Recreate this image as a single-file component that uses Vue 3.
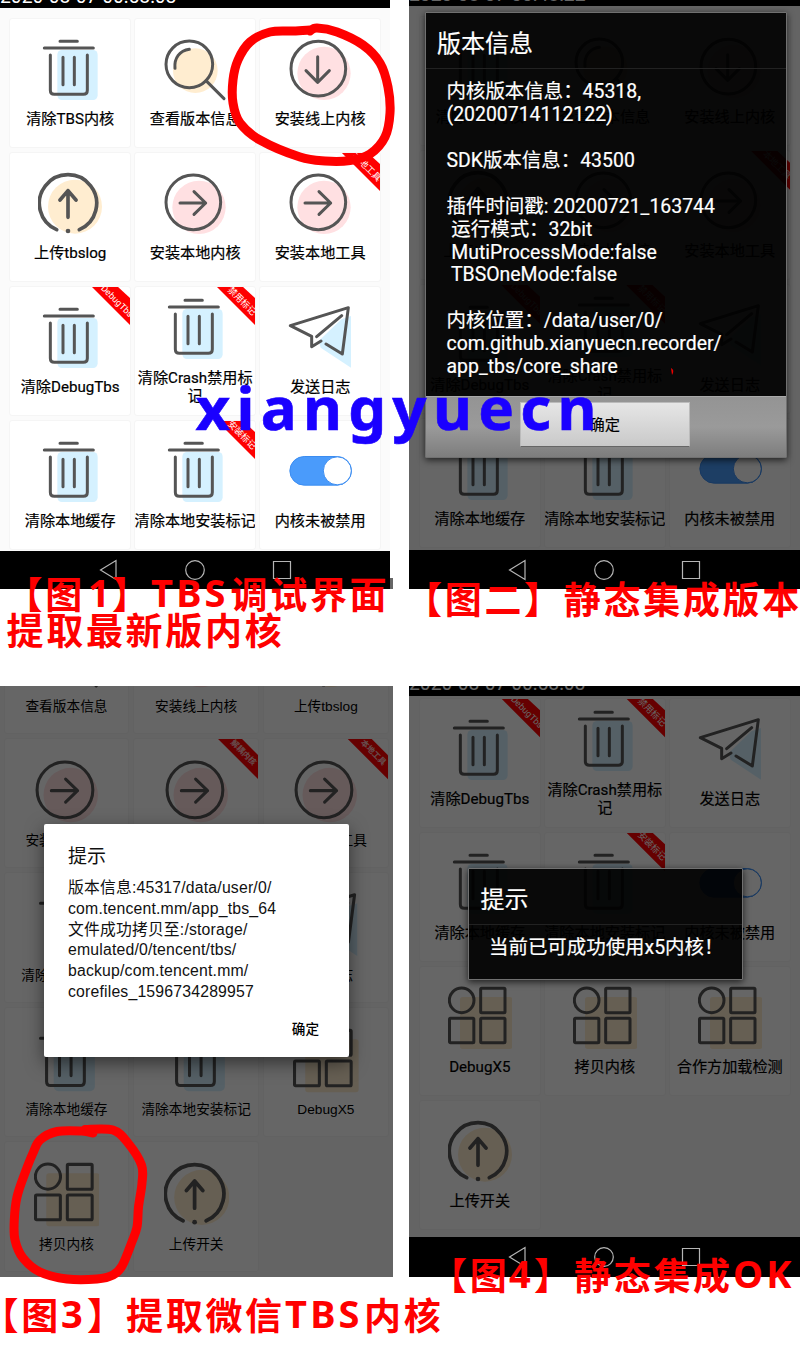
<script setup>
const card = (icon, label, ribbon) => ({ icon, label, ribbon })

const screens = [
  {
    id: 'p1', time: '2020-08-07 00:58:03', nav: true,
    cards: [
      card('trash', '清除TBS内核'), card('search', '查看版本信息'), card('down', '安装线上内核'),
      card('up', '上传tbslog'), card('right', '安装本地内核'), card('right', '安装本地工具', '本地工具'),
      card('trash', '清除DebugTbs', 'DebugTbs'), card('trash', '清除Crash禁用标记', '禁用标记'), card('plane', '发送日志'),
      card('trash', '清除本地缓存'), card('trash', '清除本地安装标记', '安装标记'), card('toggle', '内核未被禁用'),
    ],
  },
  {
    id: 'p2', time: '2020-08-07 00:48:22', nav: true, dim: true,
    cards: [
      card('trash', '清除TBS内核'), card('search', '查看版本信息'), card('down', '安装线上内核'),
      card('up', '上传tbslog'), card('right', '安装本地内核'), card('right', '安装本地工具', '本地工具'),
      card('trash', '清除DebugTbs', 'DebugTbs'), card('trash', '清除Crash禁用标记', '禁用标记'), card('plane', '发送日志'),
      card('trash', '清除本地缓存'), card('trash', '清除本地安装标记'), card('toggle', '内核未被禁用'),
    ],
  },
  {
    id: 'p3', dim: true,
    cards: [
      card('search', '查看版本信息'), card('down', '安装线上内核'), card('up', '上传tbslog'),
      card('right', '安装本地内核'), card('right', '安装解耦内核', '解耦内核'), card('right', '安装本地工具', '本地工具'),
      card('trash', '清除DebugTbs'), card('trash', '清除禁用标记'), card('plane', '发送日志'),
      card('trash', '清除本地缓存'), card('trash', '清除本地安装标记'), card('grid', 'DebugX5'),
      card('grid', '拷贝内核'), card('up', '上传开关'),
    ],
  },
  {
    id: 'p4', time: '2020-08-07 00:58:03', nav: true, dim: true,
    cards: [
      card('trash', '清除DebugTbs', 'DebugTbs'), card('trash', '清除Crash禁用标记', '禁用标记'), card('plane', '发送日志'),
      card('trash', '清除本地缓存'), card('trash', '清除本地安装标记', '安装标记'), card('toggle', '内核未被禁用'),
      card('grid', 'DebugX5'), card('grid', '拷贝内核'), card('grid', '合作方加载检测'),
      card('up', '上传开关'),
    ],
  },
]

const versionText = `内核版本信息：45318,
(20200714112122)

SDK版本信息：43500

插件时间戳: 20200721_163744
 运行模式：32bit
 MutiProcessMode:false
 TBSOneMode:false

内核位置：/data/user/0/
com.github.xianyuecn.recorder/
app_tbs/core_share`

const copyText = `版本信息:45317/data/user/0/
com.tencent.mm/app_tbs_64
文件成功拷贝至:/storage/
emulated/0/tencent/tbs/
backup/com.tencent.mm/
corefiles_1596734289957`

// Smooth freehand stroke through a list of points (Catmull-Rom to Bezier).
function stroke(p) {
  let d = `M${p[0]}`
  for (let i = 0; i < p.length - 1; i++) {
    const a = p[i - 1] || p[i], b = p[i], c = p[i + 1], e = p[i + 2] || c
    d += `C${b[0] + (c[0] - a[0]) / 6} ${b[1] + (c[1] - a[1]) / 6} ${c[0] - (e[0] - b[0]) / 6} ${c[1] - (e[1] - b[1]) / 6} ${c[0]} ${c[1]}`
  }
  return d
}
const ringTop = stroke([[310, 31], [317, 28], [337, 32], [363, 45], [380, 63], [388, 87], [390, 113], [385, 137], [370, 154], [350, 160.5], [325, 161], [300, 157], [260, 140], [240, 123], [233, 103], [233, 80], [238, 60], [250, 42], [270, 32], [293, 31], [310, 30]])
const ringBottom = stroke([[85, 1129.5], [113, 1130], [128, 1143], [141.5, 1165], [142, 1183], [138.5, 1207], [137, 1227], [131.5, 1243], [122, 1266], [113, 1275], [97, 1279], [67, 1279], [40, 1272], [23, 1258], [15, 1240], [14.3, 1220], [17, 1197], [25, 1173], [33, 1153], [40, 1140], [57, 1131.5], [82, 1131], [93, 1133]])

// Each caption is a run of CJK or Latin glyphs: [x, y, text, latin flag]
const captions = [
  [5.5, 608.5, '【图'], [88, 606.7, '1', 'l'], [112, 608.5, '】'], [151, 606.7, 'TBS', 'l'], [230.5, 608.5, '调试界面'],
  [6.5, 644.5, '提取最新版内核'],
  [405, 613.5, '【图二】静态集成版本'],
  [-18.5, 1329.5, '【图'], [61, 1328.3, '3', 'l'], [87, 1329.5, '】'], [126, 1329.5, '提取微信'], [285, 1328.3, 'TBS', 'l'], [364, 1329.5, '内核'],
  [430, 1289.5, '【图'], [509, 1287.7, '4', 'l'], [534, 1289.5, '】'], [574, 1289.5, '静态集成'], [733, 1287.7, 'OK', 'l'],
]
</script>

<template>
  <main class="sheet">
    <section v-for="s in screens" :key="s.id" class="screen" :class="s.id">
      <div v-if="s.time" class="status"><span>{{ s.time }}</span></div>
      <div class="body">
        <div class="cards">
          <div v-for="(c, i) in s.cards" :key="i" class="card">
            <svg class="icon" viewBox="0 0 192 192">
              <g v-if="c.icon === 'trash'">
                <rect class="blue" x="58" y="36" width="121" height="150" rx="14" />
                <path class="ln" d="M66 10H118M19 30H166M37 51V157Q37 169 49 169H136Q148 169 148 157V51M75 58V140M109 58V140" />
              </g>
              <g v-else-if="c.icon === 'search'">
                <circle class="sand" cx="97" cy="98" r="67" />
                <circle class="ln" cx="79" cy="79" r="70" />
                <path class="ln" d="M36 91C33 60 50 38 79 34M129 128L183 182" />
              </g>
              <g v-else-if="c.icon === 'down'">
                <circle class="pink" cx="108" cy="106" r="80" />
                <circle class="ln" cx="91" cy="92" r="82" />
                <path class="ln" d="M89 56V133M54 98L89 133L124 98" />
              </g>
              <g v-else-if="c.icon === 'right'">
                <circle class="pink" cx="108" cy="106" r="80" />
                <circle class="ln" cx="91" cy="91" r="82" />
                <path class="ln" d="M51 93H128M93 59L128 93L93 127" />
              </g>
              <g v-else-if="c.icon === 'up'">
                <circle class="sand" cx="111" cy="104" r="81" />
                <path class="ln thick" d="M56 173A86 86 0 1 1 124 173M90 56V136M66 84L90 56L114 84" />
                <circle class="dot" cx="90" cy="177" r="7" />
              </g>
              <g v-else-if="c.icon === 'plane'">
                <path class="blue" d="M92 105L160 40L189 30V185L98 125Z" />
                <path class="ln" d="M99 105L71 122V91L7 59L181 5L163 144L114 114M161 29L86 92" />
              </g>
              <g v-else-if="c.icon === 'toggle'">
                <rect class="track" x="5.5" y="49.5" width="185" height="86" rx="43" />
                <circle class="knob" cx="148" cy="92.5" r="42" />
              </g>
              <g v-else>
                <rect class="sand" x="36" y="33" width="157" height="156" rx="8" />
                <circle class="ln" cx="41" cy="43" r="37" />
                <rect class="ln" x="98" y="7" width="73" height="73" rx="3" />
                <rect class="ln" x="4.5" y="97" width="73" height="73" rx="3" />
                <rect class="ln" x="98" y="97" width="73" height="73" rx="3" />
              </g>
            </svg>
            <div class="label">{{ c.label }}</div>
            <div v-if="c.ribbon" class="ribbon"><span>{{ c.ribbon }}</span></div>
          </div>
        </div>
      </div>
      <div v-if="s.nav" class="nav">
        <svg viewBox="0 0 391 38">
          <path d="M116 9.5V28.5L100.5 19ZM273.5 10.5H290.5V27.5H273.5Z" />
          <circle cx="195" cy="19" r="9.3" />
        </svg>
      </div>
      <div v-if="s.dim" class="shade"></div>

      <div v-if="s.id === 'p2'" class="dark version">
        <h2>版本信息</h2>
        <pre>{{ versionText }}</pre>
        <footer><button>确定</button></footer>
      </div>
      <div v-if="s.id === 'p3'" class="light">
        <h2>提示</h2>
        <pre>{{ copyText }}</pre>
        <button>确定</button>
      </div>
      <div v-if="s.id === 'p4'" class="dark done">
        <h2>提示</h2>
        <pre>当前已可成功使用x5内核！</pre>
      </div>
    </section>

    <svg class="notes" viewBox="0 0 800 1360">
      <rect x="390" y="578" width="3" height="11" fill="#666" />
      <path class="ring" :d="ringTop" />
      <path class="ring" :d="ringBottom" />
      <path d="M671 368Q675 370 672 375Z" fill="#e00" />
      <text v-for="(c, i) in captions" :key="i" :x="c[0]" :y="c[1]" :class="['cap', c[3] && 'latin']">{{ c[2] }}</text>
      <text class="mark" x="195.5" y="429.5" textLength="401">xiangyuecn</text>
    </svg>
  </main>
</template>

<style>
body { background: #fff; }
</style>

<style scoped>
.sheet {
  position: relative;
  width: 800px;
  height: 1360px;
  overflow: hidden;
  display: grid;
  grid-template-columns: 409px 391px;
  grid-template-rows: 686px 674px;
  font-family: Roboto, "Noto Sans CJK SC", sans-serif;
}
.screen {
  position: relative;
  display: flex;
  flex-direction: column;
  overflow: hidden;
  background: #fbfbfb;
  height: 589px;
  width: 391px;
}
.p1 { width: 390px; }
.p3 { width: 393px; height: 590.7px; }
.p4 { height: 590.7px; }

.status {
  flex: none;
  height: 8px;
  background: #000;
  color: #fff;
  overflow: hidden;
  font-size: 19.3px;
  line-height: 20px;
  white-space: nowrap;
}
.status span { display: block; margin-top: -13px; }
.p2 .status { height: 6.3px; }
.p2 .status span { margin-top: -15px; }
.p4 .status { height: 10px; }
.p4 .status span { margin-top: -12px; }

.body { flex: 1; min-height: 0; overflow: hidden; padding: 10px 0 0 9.4px; }
.p2 .body { padding-left: 10px; }
.p4 .body { padding: 1.8px 0 0 10px; }
.p3 .body { padding: 0 0 0 3.8px; }
.cards {
  display: grid;
  grid-template-columns: repeat(3, 121.6px);
  grid-auto-rows: 130px;
  gap: 4px 3.4px;
}
.p3 .cards {
  grid-template-columns: repeat(3, 125.4px);
  grid-auto-rows: 130.5px;
  gap: 4px 4.3px;
  margin-top: -82.7px;
}
.card {
  position: relative;
  box-sizing: border-box;
  border: 1px solid #f5f5f5;
  border-radius: 3px;
  background: #fff;
  overflow: hidden;
  display: flex;
  flex-direction: column;
  align-items: center;
  justify-content: center;
  padding-bottom: 1px;
}
.p4 .card { padding-bottom: 0; }
.p3 .card { padding-bottom: 0; padding-top: 3px; }
.icon { width: 64px; height: 64px; flex: none; }
.p3 .icon { width: 65.3px; height: 65.3px; }
.label {
  margin: 8px -6px 0;
  max-width: 126px;
  font-size: 15.15px;
  line-height: 18px;
  font-weight: 400;
  -webkit-text-stroke: .2px #000;
  text-align: center;
  color: #000;
}
.p3 .label {
  font-size: 13.7px;
  -webkit-text-stroke: 0;
  font-family: "Liberation Sans", "Noto Sans CJK SC", sans-serif;
}
.ln { fill: none; stroke: #555; stroke-width: 9; stroke-linecap: round; stroke-linejoin: round; }
.thick { stroke-width: 11; }
.dot { fill: #555; }
.blue { fill: #d5f1ff; }
.sand { fill: #ffedd0; }
.pink { fill: #ffe0e2; }
.track { fill: #4a9bfb; stroke: #3b8cf0; stroke-width: 3; }
.knob { fill: #fff; stroke: #3b8cf0; stroke-width: 3; }

.ribbon {
  position: absolute;
  top: -1px;
  right: -1px;
  width: 40px;
  height: 40px;
  background: #fe0000;
  clip-path: polygon(0 0, 26px 0, 40px 13px, 40px 40px);
}
.ribbon span {
  position: absolute;
  left: 26.5px;
  top: 14.5px;
  transform: translate(-50%, -50%) rotate(45deg);
  color: #fff;
  font-size: 9px;
  line-height: 10px;
  white-space: nowrap;
}
.p3 .ribbon { width: 42px; height: 42px; clip-path: polygon(0 0, 24px 0, 42px 18px, 42px 42px); }
.p3 .ribbon span { font-size: 8px; font-weight: 700; opacity: .75; top: 15px; }

.nav { flex: none; height: 38px; background: #000; }
.p2 .nav, .p4 .nav { height: 38.5px; padding-top: .8px; }
.nav svg { display: block; width: 391px; height: 38px; }
.nav path, .nav circle { fill: none; stroke: #b5b5b5; stroke-width: 1.2; }

.shade { position: absolute; inset: 0; background: rgba(0, 0, 0, .6); }
.p2 .shade { bottom: 39.3px; }
.p4 .shade { bottom: 39.3px; }

h2, pre { margin: 0; font-family: inherit; font-weight: 400; white-space: pre; }
button { border: 0; padding: 0; font-family: inherit; color: #000; font-weight: 400; }

.dark {
  position: absolute;
  box-sizing: border-box;
  border: 1.5px solid #707070;
  border-radius: 1px;
  background: rgba(0, 0, 0, .91);
  color: #fff;
  box-shadow: 0 2px 7px rgba(0, 0, 0, .7);
  display: flex;
  flex-direction: column;
  -webkit-text-stroke: .2px #fff;
}
.dark h2 {
  height: 56px;
  line-height: 63px;
  box-sizing: border-box;
  padding-left: 11.5px;
  border-bottom: 1.5px solid #222;
  font-size: 24px;
}
.dark pre { font-size: 19.45px; line-height: 22.88px; padding: 12.4px 0 0 21px; }
.version { left: 15.5px; top: 12px; width: 362.5px; height: 446px; }
.version footer {
  margin-top: auto;
  height: 61px;
  box-sizing: border-box;
  border-top: 1px solid #aaa;
  background: linear-gradient(#949494, #9a9a9a 50%, #7d7d7d);
  display: flex;
  justify-content: center;
  padding: 5px 2px 0 0;
}
.version button {
  width: 170px;
  height: 45px;
  box-sizing: border-box;
  border: 1px solid #bbb;
  border-bottom-color: #666;
  background: linear-gradient(#e6e6e6, #c9c9c9);
  font-size: 15.2px;
  padding-bottom: 3px;
  -webkit-text-stroke: .2px #000;
}
.done { left: 59px; top: 182px; width: 275px; height: 111.5px; }
.done pre { padding-left: 20px; }

.light {
  position: absolute;
  left: 44px;
  top: 138px;
  width: 305px;
  height: 233px;
  box-sizing: border-box;
  border-radius: 2px;
  background: #fff;
  color: #111;
  box-shadow: 0 6px 18px rgba(0, 0, 0, .5);
  padding: 21px 24px 0;
  display: flex;
  flex-direction: column;
  font-family: "Liberation Sans", "Noto Sans CJK SC", sans-serif;
}
.light h2 { font-size: 19px; line-height: 24px; }
.light pre { font-size: 15.8px; line-height: 20.75px; margin-top: 9px; letter-spacing: .18px; }
.light button { align-self: flex-end; margin: 17px 6px 0 0; font-size: 13.6px; line-height: 20px; background: none; font-weight: 500; }

.notes { position: absolute; inset: 0; width: 800px; height: 1360px; }
.ring { fill: none; stroke: #f00; stroke-width: 9; stroke-linecap: round; stroke-linejoin: round; }
.cap { fill: #f00; font: 700 37px "Noto Sans CJK SC", sans-serif; letter-spacing: 2.7px; }
.latin { font: 700 38px "Noto Sans", sans-serif; letter-spacing: 3.2px; }
.mark { fill: #1a00ff; font: 700 60px "Noto Sans", sans-serif; stroke: #1a00ff; stroke-width: .6; }
</style>
